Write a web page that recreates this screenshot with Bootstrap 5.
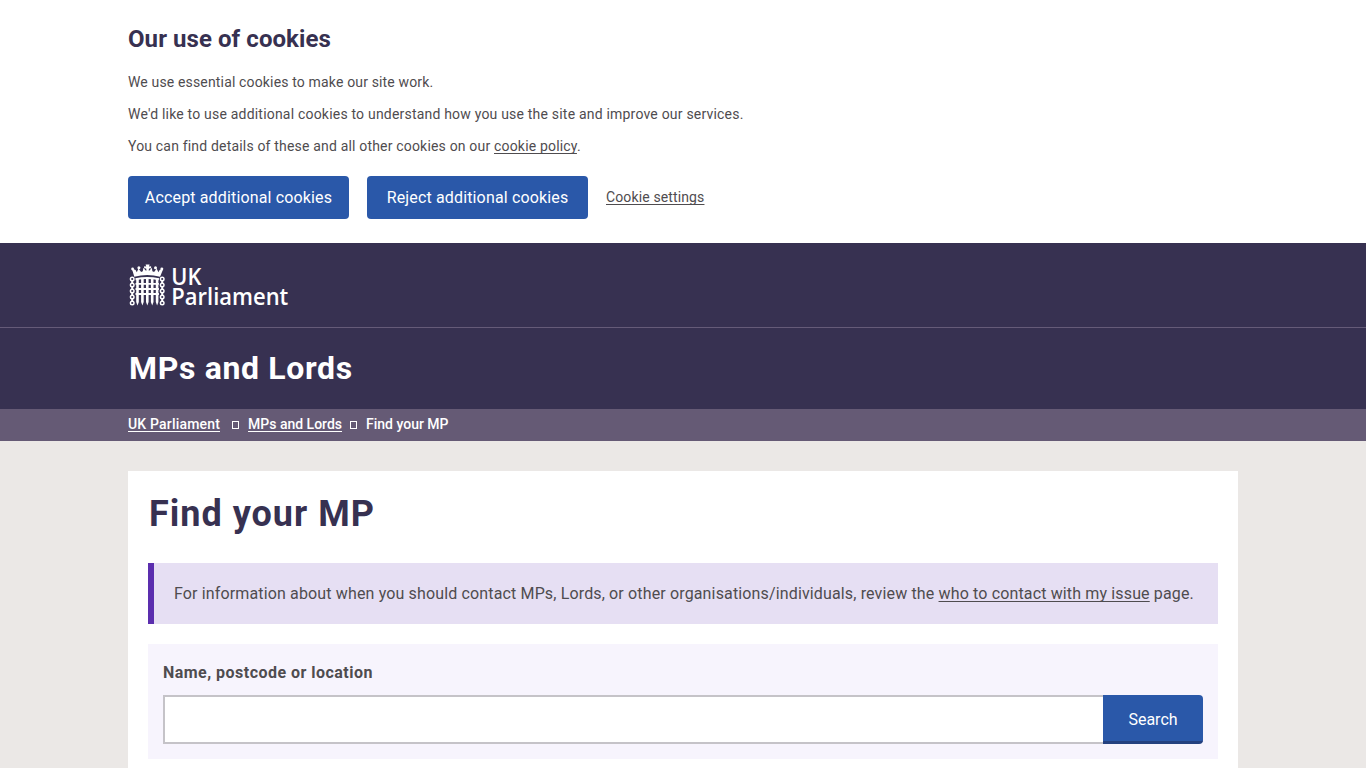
<!DOCTYPE html>
<html lang="en">
<head>
<meta charset="utf-8">
<meta name="viewport" content="width=device-width, initial-scale=1">
<title>Find your MP - MPs and Lords - UK Parliament</title>
<link href="https://cdn.jsdelivr.net/npm/bootstrap@5.3.0/dist/css/bootstrap.min.css" rel="stylesheet">
<style>
  html, body { height: 100%; overflow: hidden; }
  body { font-family: Roboto, "Liberation Sans", sans-serif; font-size: 16px; line-height: 24px; color: #4f4c4f; background: #ebe8e6; }
  a, a:hover { color: inherit; text-underline-offset: 2px; text-decoration-thickness: 1px; text-decoration-skip-ink: none; }
  .wrap { width: 1110px; margin: 0 auto; }
  .cookie-bar { height: 243px; padding-top: 24px; font-size: 14px; }
  .cookie-bar h2 { font-size: 24px; line-height: 30px; font-weight: 700; letter-spacing: .07px; color: #373151; margin: 0 0 16px; }
  .cookie-bar p { line-height: 24px; margin: 0 0 8px; letter-spacing: .18px; }
  .cookie-bar p.first-line { letter-spacing: .155px; }
  .cookie-bar p.second-line { letter-spacing: .2px; }
  .cookie-actions { gap: 18px; margin-top: 18px; letter-spacing: .13px; }
  .cookie-actions a { padding-bottom: 2px; }
  .btn-parl { background: #2a58a9; color: #fff; border: 0; border-radius: 4px; font-size: 16px; line-height: 24px; padding: 0; }
  .btn-parl:hover { background: #23498c; color: #fff; }
  .btn-cookie { width: 221px; height: 43px; letter-spacing: .15px; }
  .brand-bar { height: 85px; background: #373151; border-bottom: 1px solid #655b78; padding-top: 19px; }
  .brand-bar svg { display: block; overflow: visible; }
  .title-bar { height: 81px; background: #373151; color: #fff; font-size: 32px; line-height: 40px; font-weight: 700; letter-spacing: .65px; padding-bottom: 1px; }
  .title-bar .wrap { padding-left: 1px; }
  .crumb-bar { height: 32px; background: #655a75; color: #fff; font-size: 14px; font-weight: 500; line-height: 31px; }
  .crumb-sep { width: 7px; height: 8px; border: 1px solid #fff; margin: 1px 9px 0 8px; }
  .crumb-first { letter-spacing: .18px; margin-right: 4px; }
  .panel { background: #fff; margin-top: 30px; height: 297px; padding: 20px 20px 0; }
  .panel h1 { font-size: 36px; line-height: 46px; font-weight: 700; letter-spacing: 1px; color: #373151; margin: 0 0 26px; padding-left: 1px; }
  .notice { background: #e6dff3; border-left: 6px solid #5b2eae; height: 61px; padding-left: 20px; margin-bottom: 20px; letter-spacing: .144px; }
  .search-box { background: #f7f4fd; height: 115px; padding: 17px 15px 0; }
  .search-box label { font-weight: 700; line-height: 24px; letter-spacing: .47px; margin-bottom: 10px; display: block; }
  .search-box .form-control { height: 49px; border: 2px solid #c5c3c8; border-right: 0; border-radius: 0; }
  .btn-search { width: 100px; height: 49px; border-radius: 0 4px 4px 0; border-bottom: 3px solid #24417f; padding-top: 3px; }
</style>
</head>
<body>
<section class="cookie-bar bg-white">
  <div class="wrap">
    <h2>Our use of cookies</h2>
    <p class="first-line">We use essential cookies to make our site work.</p>
    <p class="second-line">We'd like to use additional cookies to understand how you use the site and improve our services.</p>
    <p>You can find details of these and all other cookies on our <a href="#">cookie policy</a>.</p>
    <div class="cookie-actions d-flex align-items-center">
      <button class="btn btn-parl btn-cookie">Accept additional cookies</button>
      <button class="btn btn-parl btn-cookie">Reject additional cookies</button>
      <a href="#">Cookie settings</a>
    </div>
  </div>
</section>
<header>
  <div class="brand-bar"><div class="wrap">
    <svg width="164" height="46" viewBox="128 262 164 46" role="img" aria-label="UK Parliament">
      <!-- crown -->
      <g fill="#fff">
        <path d="M131.800 268.500l3.800 1.600 1.200 2.200 1.700-3.800 2.600 3.400 1.700-.6.600-3.600 2.200 2.900h1l-.5-2.200-2-.2v-1.900l2.100.3-.6-2.100h4l-.6 2.100 2.100-.3v1.900l-2 .2-.5 2.200h1l2.200-2.900.6 3.600 1.700.6 2.600-3.400 1.700 3.800 1.200-2.200 3.800-1.600-3.300 8.200q-12.900-3.200-25.800 0z"/>
        <circle cx="132.600" cy="269" r="1.400"/><circle cx="138.900" cy="267.700" r="1.500"/><circle cx="155.500" cy="267.700" r="1.500"/><circle cx="161.800" cy="269" r="1.400"/>
      </g>
      <!-- grille -->
      <path d="M135.500 279.200q11.700-2.400 23.400 0M135.500 283.900h23.400M135.500 289h23.400M135.500 294h23.400" fill="none" stroke="#fff" stroke-width="1.900"/>
      <path d="M136.200 278h2.600v24l-1.300 3.500-1.300-3.500zM141.100 278h2.600v24l-1.300 3.500-1.300-3.500zM146 277.500h2.600v24.500l-1.300 3.500-1.300-3.500zM150.900 278h2.600v24l-1.300 3.500-1.300-3.500zM155.800 278h2.600v24l-1.300 3.500-1.300-3.500z" fill="#fff"/>
      <!-- chains -->
      <g fill="none" stroke="#fff" stroke-width="1.400">
        <circle cx="132.200" cy="279" r="1.800"/><circle cx="132.200" cy="285" r="1.800"/><circle cx="132.200" cy="291" r="1.800"/><circle cx="132.200" cy="297" r="1.800"/><circle cx="132.200" cy="303" r="1.800"/>
        <circle cx="162.200" cy="279" r="1.800"/><circle cx="162.200" cy="285" r="1.800"/><circle cx="162.200" cy="291" r="1.800"/><circle cx="162.200" cy="297" r="1.800"/><circle cx="162.200" cy="303" r="1.800"/>
        <path d="M132.200 281v2m0 4v2m0 4v2m0 4v2M162.200 281v2m0 4v2m0 4v2m0 4v2" stroke-width="2"/>
      </g>
      <g fill="#fff" font-family="'Open Sans', 'Noto Sans', sans-serif" font-weight="600" font-size="23">
        <text x="171.300" y="285" textLength="30" lengthAdjust="spacingAndGlyphs">UK</text>
        <text x="171.300" y="304.700" textLength="117" lengthAdjust="spacingAndGlyphs">Parliament</text>
      </g>
    </svg>
  </div></div>
  <div class="title-bar d-flex align-items-center"><div class="wrap">MPs and Lords</div></div>
</header>
<nav class="crumb-bar" aria-label="Breadcrumb"><div class="wrap d-flex align-items-center">
  <a href="#" class="crumb-first">UK Parliament</a><i class="crumb-sep"></i><a href="#">MPs and Lords</a><i class="crumb-sep"></i><span>Find your MP</span></div></nav>
<main class="wrap panel">
  <h1>Find your MP</h1>
  <div class="notice d-flex align-items-center"><span>For information about when you should contact MPs, Lords, or other organisations/individuals, review the <a href="#">who to contact with my issue</a> page.</span></div>
  <form class="search-box"><label for="q">Name, postcode or location</label>
    <div class="d-flex"><input id="q" class="form-control"><button type="button" class="btn btn-parl btn-search flex-shrink-0">Search</button></div>
  </form>
</main>
</body>
</html>
